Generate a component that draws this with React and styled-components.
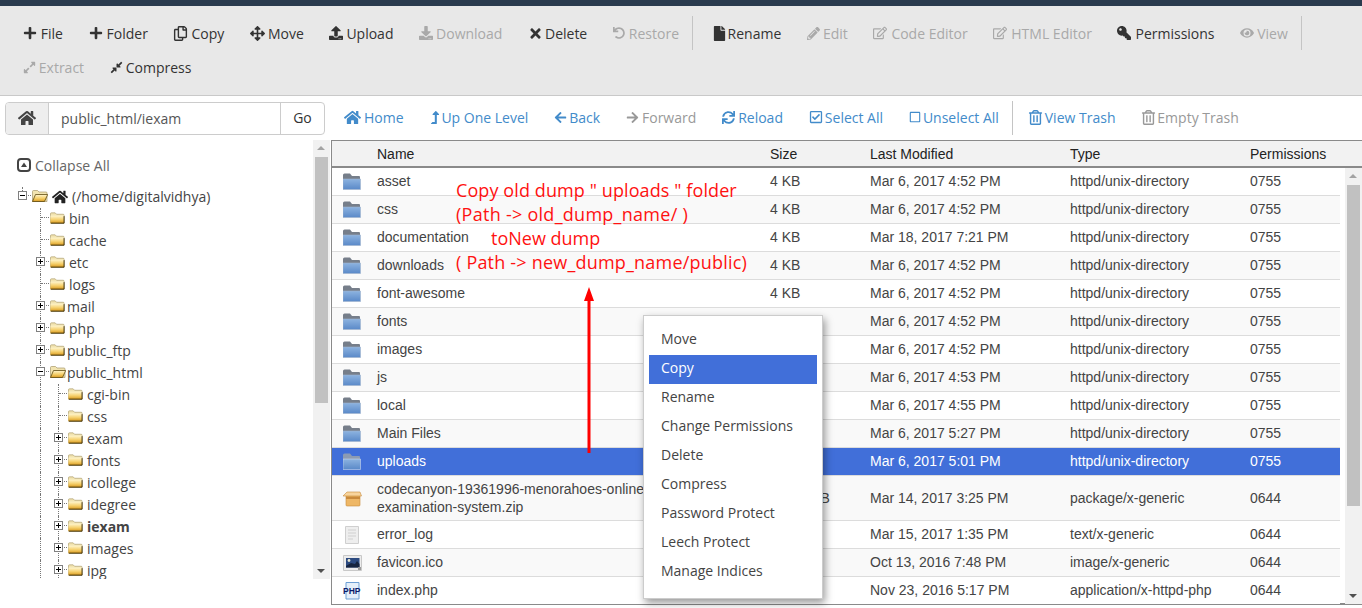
import React from "react";
import styled, { createGlobalStyle } from "styled-components";
import {
  FaPlus, FaRegCopy, FaArrowsAlt, FaUpload, FaDownload, FaTimes, FaUndo, FaFile, FaPencilAlt,
  FaRegEdit, FaKey, FaEye, FaExpandAlt, FaCompressAlt, FaHome, FaLevelUpAlt, FaArrowLeft,
  FaArrowRight, FaSync, FaRegCheckSquare, FaRegSquare, FaRegTrashAlt,
} from "react-icons/fa";

const Global = createGlobalStyle`
  html, body { margin: 0; padding: 0; background: #fff; overflow: hidden; height: 608px; }
  * { box-sizing: border-box; }
`;

const Page = styled.div`
  position: relative;
  width: 1362px;
  height: 608px;
  overflow: hidden;
  font-family: "Open Sans", sans-serif;
  font-size: 14px;
  color: #333;
`;
const TopBar = styled.div`height: 6px; background: #2a3b4e;`;
const Toolbar = styled.div`
  height: 90px;
  padding: 10px 10px 0;
  background: #e8e8e8;
  border-bottom: 1px solid #c9c9c9;
`;
const ToolRow = styled.div`display: flex; height: 34px; align-items: center;`;
const ToolButton = styled.div`
  display: flex;
  align-items: center;
  padding: 0 12.8px;
  white-space: nowrap;
  color: ${(p) => (p.$off ? "#a9a9a9" : "#333")};
`;
const IconSlot = styled.span`
  display: inline-flex;
  align-items: center;
  flex: none;
  width: ${(p) => p.$w}px;
  svg { display: block; transform: ${(p) => (p.$flip ? "scaleX(-1)" : "none")}; }
`;
const Divider = styled.div`
  flex: none;
  width: 1px;
  height: 34px;
  background: #c4c4c4;
  margin-right: ${(p) => p.$mr || 0}px;
`;
const AddressRow = styled.div`
  display: flex;
  align-items: center;
  height: 44px;
  padding: 0 0 0 5px;
`;
const Address = styled.div`
  display: flex;
  flex: none;
  width: 320px;
  height: 33px;
  margin-right: 6px;
  border: 1px solid #ccc;
  border-radius: 4px;
  overflow: hidden;
  background: #fff;
`;
const HomeAddon = styled.div`
  width: 43px;
  display: flex;
  align-items: center;
  justify-content: center;
  background: #eee;
  border-right: 1px solid #ccc;
  color: #444;
`;
const PathInput = styled.div`
  flex: 1;
  padding: 0 12px;
  line-height: 32px;
  color: #555;
`;
const GoButton = styled.div`
  width: 44px;
  border-left: 1px solid #ccc;
  text-align: center;
  line-height: 30px;
  color: #333;
`;
const NavLink = styled(ToolButton)`
  padding: 0 12.95px 2px;
  color: ${(p) => (p.$off ? "#999" : "#428bca")};
`;
const Panels = styled.div`display: flex; height: 466px;`;
const Sidebar = styled.div`display: flex; flex: none; width: 331px; height: 439px;`;
const TreeArea = styled.div`flex: none; width: 313px; overflow: hidden;`;
const CollapseAll = styled.div`
  display: flex;
  align-items: center;
  gap: 4px;
  height: 22px;
  margin: 14px 0 10px 17px;
  color: #666;
  svg { display: block; }
`;
const TreeRow = styled.div`
  display: flex;
  height: 22px;
  padding-left: 14px;
  color: #444;
  font-weight: ${(p) => (p.$bold ? 700 : 400)};
  line-height: 22px;
  white-space: nowrap;
`;
const TreeCell = styled.div`
  position: relative;
  flex: none;
  width: 18px;
  height: 22px;
  &::before {
    content: "";
    display: ${(p) => (p.$v ? "block" : "none")};
    position: absolute;
    left: 8px;
    top: ${(p) => (p.$v === "top" ? "1px" : "0")};
    height: ${(p) => (p.$v === "top" ? "6px" : "22px")};
    border-left: 1px dotted #777;
  }
  &::after {
    content: "";
    display: ${(p) => (p.$h ? "block" : "none")};
    position: absolute;
    left: 9px;
    right: 1px;
    top: 9px;
    border-top: 1px dotted #777;
  }
`;
const Toggle = styled.div`
  position: absolute;
  z-index: 1;
  left: 4px;
  top: 5px;
  width: 9px;
  height: 9px;
  background: #fff;
  border: 1px solid #808080;
  &::before {
    content: "";
    position: absolute;
    left: 1px;
    right: 1px;
    top: 3px;
    height: 1px;
    background: #000;
  }
  &::after {
    content: "";
    display: ${(p) => (p.$open ? "none" : "block")};
    position: absolute;
    top: 1px;
    bottom: 1px;
    left: 3px;
    width: 1px;
    background: #000;
  }
`;
const FolderSlot = styled.span`
  flex: none;
  width: ${(p) => p.$w || 15}px;
  margin-right: ${(p) => p.$mr}px;
  padding-top: 4px;
  svg { display: block; }
`;
const ScrollTrack = styled.div`
  position: relative;
  flex: none;
  width: ${(p) => p.$w}px;
  background: #f1f1f1;
`;
const ScrollThumb = styled.div`
  position: absolute;
  left: 2px;
  width: 13px;
  top: ${(p) => p.$top}px;
  height: ${(p) => p.$h}px;
  background: #c1c1c1;
`;
const ScrollArrow = styled.div`
  position: absolute;
  left: 4px;
  ${(p) => (p.$down ? "bottom: 6px" : "top: 6px")};
  width: 0;
  height: 0;
  border-left: 4px solid transparent;
  border-right: 4px solid transparent;
  ${(p) => (p.$down ? "border-top: 4px solid #505050" : "border-bottom: 4px solid #a3a3a3")};
`;
const TablePanel = styled.div`
  flex: 1;
  height: 465px;
  border-left: 1px solid #8a8a8a;
  border-top: 1px solid #8a8a8a;
  border-bottom: 2px solid #8a8a8a;
  font-family: "Liberation Sans", Arial, sans-serif;
  font-size: 14px;
  color: #444;
`;
const columns = "45px 393px 100px 200px 180px 1fr";
const HeadRow = styled.div`
  display: grid;
  grid-template-columns: ${columns};
  height: 27px;
  line-height: 26px;
  background: #f2f2f2;
  border-bottom: 2px solid #8a8a8a;
  color: #222;
`;
const BodyWrap = styled.div`display: flex; height: 436px;`;
const Rows = styled.div`flex: none; width: 1008px; overflow: hidden;`;
const Gutter = styled.div`flex: none; width: 5px;`;
const Row = styled.div`
  display: grid;
  grid-template-columns: ${columns};
  align-items: center;
  height: ${(p) => (p.$tall ? 45 : 28)}px;
  padding-bottom: ${(p) => (p.$tall ? 0 : 2)}px;
  background: ${(p) => (p.$sel ? "#416fd9" : p.$alt ? "#f9f9f9" : "#fff")};
  color: ${(p) => (p.$sel ? "#fff" : "#444")};
  border-bottom: 1px solid #dcdcdc;
  line-height: 18px;
`;
const RowIcon = styled.div`
  padding: ${(p) => (p.$tall ? 0 : 2)}px 0 0 11px;
  svg { display: block; }
`;
const Cell = styled.div`white-space: nowrap;`;

const ContextMenu = styled.div`
  position: absolute;
  left: 643px;
  top: 315px;
  width: 180px;
  height: 284px;
  padding: 10px 5px;
  background: #fff;
  border: 1px solid #ccc;
  box-shadow: 2px 4px 8px rgba(0, 0, 0, 0.4);
  z-index: 3;
`;
const MenuItem = styled.div`
  height: 29px;
  line-height: 25px;
  padding-left: 12px;
  color: ${(p) => (p.$active ? "#fff" : "#444")};
  background: ${(p) => (p.$active ? "#416fd9" : "transparent")};
`;
const Note = styled.div`
  position: absolute;
  left: 456px;
  top: 178px;
  z-index: 2;
  color: #f11;
  font-family: "Open Sans", sans-serif;
  font-size: 18px;
  line-height: 24px;
  white-space: nowrap;
`;
const NoteLine = styled.div`
  padding-left: ${(p) => p.$indent || 0}px;
  letter-spacing: ${(p) => p.$ls || 0}px;
`;
const ArrowMark = styled.svg`
  position: absolute;
  left: 582px;
  top: 287px;
  z-index: 2;
`;

const YellowFolder = ({ open }) => (
  <svg width={open ? 16 : 15} height="12" viewBox="0 0 16 12">
    <defs>
      <linearGradient id="yf" x1="0" y1="0" x2="0" y2="1">
        <stop offset="0" stopColor="#fff6cf" />
        <stop offset="0.55" stopColor="#f5cf6a" />
        <stop offset="1" stopColor="#d99a20" />
      </linearGradient>
    </defs>
    <path d="M0.5 1.5 Q0.5 .5 1.5 .5 H5.5 L7 2 H14 Q15 2 15 3 V11.5 H0.5 Z" fill="#f2e4b0" stroke="#a8986a" strokeWidth=".7" />
    {open ? (
      <path d="M0.5 11.5 L3.5 4.5 H15.7 L12.5 11.5 Z" fill="url(#yf)" stroke="#5e4a10" strokeWidth=".8" />
    ) : (
      <path d="M0.5 3.5 H15 V11.5 H0.5 Z" fill="url(#yf)" />
    )}
    {!open && <path d="M1 11.5 H15 V4" fill="none" stroke="#3a2c06" strokeWidth="1" />}
  </svg>
);

const BlueFolder = ({ sel }) => (
  <svg width="18" height="17" viewBox="0 0 18 17">
    <defs>
      <linearGradient id="bf" x1="0" y1="0" x2="0" y2="1">
        <stop offset="0" stopColor="#8db3e0" />
        <stop offset="1" stopColor="#5a89c8" />
      </linearGradient>
    </defs>
    <path d="M0 2 Q0 .5 1.5 .5 H7 L9 3 H16 Q17 3 17 4 V16 H0 Z" fill={sel ? "#8c9bb3" : "#767e8a"} />
    <path d="M0 6 H17.5 V16.5 H0 Z" fill="url(#bf)" stroke={sel ? "#c9d6ee" : "#a0b4cc"} strokeWidth=".6" />
  </svg>
);

const CollapseIcon = () => (
  <svg width="14" height="14" viewBox="0 0 14 14">
    <rect x="1" y="1" width="12" height="12" rx="3" fill="none" stroke="#444" strokeWidth="2" />
    <path d="M7 4.5 L10 9 H4 Z" fill="#444" />
  </svg>
);
const BoxIcon = () => (
  <svg width="19" height="17" viewBox="0 0 19 17">
    <path d="M3 6 H17 V15 Q17 16 16 16 H4 Q3 16 3 15 Z" fill="#eeb766" stroke="#c8893a" strokeWidth=".6" />
    <path d="M0 6 L4 2 H17 L18.5 6 Z" fill="#f8d49c" stroke="#c8893a" strokeWidth=".6" />
    <path d="M3 7 H17 V9 H3 Z" fill="#c98a3c" />
  </svg>
);
const LogIcon = () => (
  <svg width="18" height="18" viewBox="0 0 18 18">
    <path d="M2.5 .5 H15.5 V17.5 H2.5 Z" fill="#eeeeee" stroke="#cfcfcf" />
    <path d="M5 4 H13 M5 7 H13 M5 10 H13 M5 13 H10" stroke="#dadada" strokeWidth="1.4" />
  </svg>
);
const PictureIcon = () => (
  <svg width="19" height="16" viewBox="0 0 19 16">
    <path d="M.5 .5 H18.5 V15.5 H.5 Z" fill="#ececec" stroke="#c8c8c8" />
    <path d="M3 3 H16.5 V12.5 H3 Z" fill="#2c4a80" />
    <circle cx="6" cy="5.5" r="1.4" fill="#e8e8d0" />
    <path d="M3 11 L8 8 L12 9 L14 6 L16.5 9 V12.5 H3 Z" fill="#16243f" />
    <rect x="15" y="12" width="3" height="3" fill="#999" />
  </svg>
);
const PhpIcon = () => (
  <svg width="18" height="18" viewBox="0 0 18 18">
    <path d="M3 .5 H16 V17 H3 Z" fill="#e4effa" stroke="#6d9fd4" />
    <text x="0" y="12" fontFamily="Liberation Sans" fontWeight="700" fontSize="8.5" fill="#0b1a6a">PHP</text>
  </svg>
);

const row1a = [
  [FaPlus, "File", 18, 0, 14], [FaPlus, "Folder", 18, 0, 14], [FaRegCopy, "Copy", 18, 0, 15], [FaArrowsAlt, "Move", 18, 0, 15],
  [FaUpload, "Upload", 17, 0, 14], [FaDownload, "Download", 17, 1, 14], [FaTimes, "Delete", 17, 0, 15], [FaUndo, "Restore", 16, 1, 12],
];
const row1b = [
  [FaFile, "Rename", 16, 0, 15], [FaPencilAlt, "Edit", 16, 1, 13], [FaRegEdit, "Code Editor", 18, 1, 14],
  [FaRegEdit, "HTML Editor", 18, 1, 14], [FaKey, "Permissions", 18, 0, 14, true], [FaEye, "View", 17, 1, 14],
];
const row2 = [[FaExpandAlt, "Extract", 16, 1, 13], [FaCompressAlt, "Compress", 16, 0, 13]];
const nav1 = [
  [FaHome, "Home", 20, 0, 17], [FaLevelUpAlt, "Up One Level", 12, 0, 13], [FaArrowLeft, "Back", 15, 0, 13],
  [FaArrowRight, "Forward", 16, 1, 13], [FaSync, "Reload", 16, 0, 13], [FaRegCheckSquare, "Select All", 16, 0, 14],
  [FaRegSquare, "Unselect All", 14, 0, 12],
];
const nav2 = [[FaRegTrashAlt, "View Trash", 17, 0, 15], [FaRegTrashAlt, "Empty Trash", 16, 1, 15]];

const Tool = ({ item }) => {
  const [Icon, label, w, off, size, flip] = item;
  return (
    <ToolButton $off={!!off}>
      <IconSlot $w={w} $flip={flip}><Icon size={size} /></IconSlot>
      {label}
    </ToolButton>
  );
};
const Nav = ({ item }) => {
  const [Icon, label, w, off, size] = item;
  return (
    <NavLink $off={!!off}>
      <IconSlot $w={w}><Icon size={size} /></IconSlot>
      {label}
    </NavLink>
  );
};

const tree = [
  ["bin", 1, null, 4], ["cache", 1, null, 4], ["etc", 1, "plus", 4], ["logs", 1, null, 4], ["mail", 1, "plus", 2],
  ["php", 1, "plus", 4], ["public_ftp", 1, "plus", 2], ["public_html", 1, "minus", 2],
  ["cgi-bin", 2, null, 4], ["css", 2, null, 4], ["exam", 2, "plus", 4], ["fonts", 2, "plus", 4],
  ["icollege", 2, "plus", 4], ["idegree", 2, "plus", 4], ["iexam", 2, "plus", 4], ["images", 2, "plus", 4], ["ipg", 2, "plus", 4],
];

const files = [
  ["asset", "4 KB", "Mar 6, 2017 4:52 PM", "0755"],
  ["css", "4 KB", "Mar 6, 2017 4:52 PM", "0755"],
  ["documentation", "4 KB", "Mar 18, 2017 7:21 PM", "0755"],
  ["downloads", "4 KB", "Mar 6, 2017 4:52 PM", "0755"],
  ["font-awesome", "4 KB", "Mar 6, 2017 4:52 PM", "0755"],
  ["fonts", "", "Mar 6, 2017 4:52 PM", "0755"],
  ["images", "", "Mar 6, 2017 4:52 PM", "0755"],
  ["js", "", "Mar 6, 2017 4:53 PM", "0755"],
  ["local", "", "Mar 6, 2017 4:55 PM", "0755"],
  ["Main Files", "", "Mar 6, 2017 5:27 PM", "0755"],
  ["uploads", "", "Mar 6, 2017 5:01 PM", "0755"],
];
const others = [
  [<BoxIcon />, <>codecanyon-19361996-menorahoes-online-<br />examination-system.zip</>, "20.45 MB", "Mar 14, 2017 3:25 PM", "package/x-generic", true],
  [<LogIcon />, "error_log", "", "Mar 15, 2017 1:35 PM", "text/x-generic"],
  [<PictureIcon />, "favicon.ico", "", "Oct 13, 2016 7:48 PM", "image/x-generic"],
  [<PhpIcon />, "index.php", "", "Nov 23, 2016 5:17 PM", "application/x-httpd-php"],
];
const menu = ["Move", "Copy", "Rename", "Change Permissions", "Delete", "Compress", "Password Protect", "Leech Protect", "Manage Indices"];

export default function App() {
  return (
    <Page>
      <Global />
      <TopBar />
      <Toolbar>
        <ToolRow>
          {row1a.map((t) => <Tool key={t[1]} item={t} />)}
          <Divider $mr={6} />
          {row1b.map((t) => <Tool key={t[1]} item={t} />)}
          <Divider />
        </ToolRow>
        <ToolRow>
          {row2.map((t) => <Tool key={t[1]} item={t} />)}
        </ToolRow>
      </Toolbar>
      <AddressRow>
        <Address>
          <HomeAddon><FaHome size={18} /></HomeAddon>
          <PathInput>public_html/iexam</PathInput>
          <GoButton>Go</GoButton>
        </Address>
        {nav1.map((n) => <Nav key={n[1]} item={n} />)}
        <Divider $mr={2} />
        {nav2.map((n) => <Nav key={n[1]} item={n} />)}
      </AddressRow>
      <Panels>
        <Sidebar>
          <TreeArea>
            <CollapseAll><CollapseIcon />Collapse All</CollapseAll>
            <TreeRow>
              <TreeCell $v="top" $h><Toggle $open /></TreeCell>
              <FolderSlot $w={16} $mr={4}><YellowFolder open /></FolderSlot>
              <IconSlot $w={20}><FaHome size={16} color="#222" /></IconSlot>
              (/home/digitalvidhya)
            </TreeRow>
            {tree.map(([name, level, toggle, mr]) => (
              <TreeRow key={name} $bold={name === "iexam"}>
                <TreeCell />
                {level === 2 && <TreeCell $v />}
                <TreeCell $v $h>{toggle && <Toggle $open={toggle === "minus"} />}</TreeCell>
                <FolderSlot $w={name === "public_html" ? 16 : 15} $mr={name === "public_html" ? 1 : mr}>
                  <YellowFolder open={name === "public_html"} />
                </FolderSlot>
                {name}
              </TreeRow>
            ))}
          </TreeArea>
          <ScrollTrack $w={17}>
            <ScrollArrow />
            <ScrollThumb $top={17} $h={246} />
            <ScrollArrow $down />
          </ScrollTrack>
        </Sidebar>
        <TablePanel>
          <HeadRow>
            <span />
            <Cell>Name</Cell>
            <Cell>Size</Cell>
            <Cell>Last Modified</Cell>
            <Cell>Type</Cell>
            <Cell>Permissions</Cell>
          </HeadRow>
          <BodyWrap>
            <Rows>
              {files.map(([name, size, date, perm], i) => (
                <Row key={name} $alt={i % 2 === 1} $sel={name === "uploads"}>
                  <RowIcon><BlueFolder sel={name === "uploads"} /></RowIcon>
                  <Cell>{name}</Cell>
                  <Cell>{size}</Cell>
                  <Cell>{date}</Cell>
                  <Cell>httpd/unix-directory</Cell>
                  <Cell>{perm}</Cell>
                </Row>
              ))}
              {others.map(([icon, name, size, date, type, tall], i) => (
                <Row key={type} $alt={i % 2 === 0} $tall={tall}>
                  <RowIcon $tall={tall}>{icon}</RowIcon>
                  <Cell>{name}</Cell>
                  <Cell>{size}</Cell>
                  <Cell>{date}</Cell>
                  <Cell>{type}</Cell>
                  <Cell>0644</Cell>
                </Row>
              ))}
            </Rows>
            <Gutter />
            <ScrollTrack $w={17}>
              <ScrollArrow />
              <ScrollThumb $top={17} $h={321} />
              <ScrollArrow $down />
            </ScrollTrack>
          </BodyWrap>
        </TablePanel>
      </Panels>
      <Note>
        <NoteLine $ls={0.1}>Copy old dump " uploads " folder</NoteLine>
        <NoteLine $ls={0.27}>(Path -&gt; old_dump_name/ )</NoteLine>
        <NoteLine $indent={35}>toNew dump</NoteLine>
        <NoteLine $ls={0.2}>( Path -&gt; new_dump_name/public)</NoteLine>
      </Note>
      <ArrowMark width="14" height="166" viewBox="0 0 14 166">
        <path d="M7 0 L12 14 H8.5 V166 H5.5 V14 H2 Z" fill="#f00" />
      </ArrowMark>
      <ContextMenu>
        {menu.map((m) => <MenuItem key={m} $active={m === "Copy"}>{m}</MenuItem>)}
      </ContextMenu>
    </Page>
  );
}
